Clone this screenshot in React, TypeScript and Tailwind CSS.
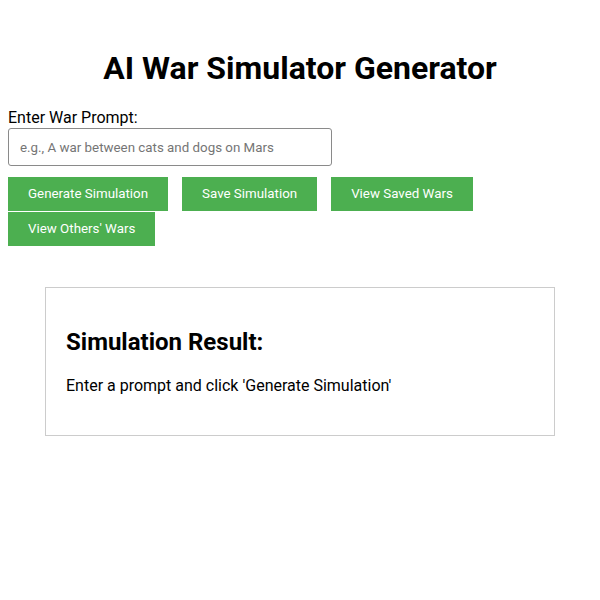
import React, { useState } from "react";

const buttons = ["Generate Simulation", "Save Simulation", "View Saved Wars", "View Others' Wars"];

const App: React.FC = () => {
  const [prompt, setPrompt] = useState("");

  return (
    <div className="min-h-[600px] bg-white px-2 pt-[50px] text-black" style={{ fontFamily: "Roboto, 'Noto Sans', sans-serif" }}>
      <h1 className="mb-[21px] text-center text-[32px] font-bold leading-[37px]">AI War Simulator Generator</h1>

      <label htmlFor="prompt" className="block text-base leading-[19px]">
        Enter War Prompt:
      </label>
      <input
        id="prompt"
        type="text"
        value={prompt}
        onChange={(e) => setPrompt(e.target.value)}
        placeholder="e.g., A war between cats and dogs on Mars"
        className="mt-px h-[38px] w-[324px] rounded-[3px] border border-[#8a8a8a] px-[11px] text-[13.333px] text-black placeholder-[#757575] outline-none"
      />

      <div className="mt-[11px] flex flex-wrap gap-x-[14px] gap-y-px">
        {buttons.map((b) => (
          <button key={b} className="h-[34px] bg-[#4caf50] px-5 text-[13.333px] text-white">
            {b}
          </button>
        ))}
      </div>

      <div className="mx-auto mt-[41px] w-[510px] border border-[#cccccc] px-5 pb-[21px] pt-[40px]">
        <h2 className="text-2xl font-bold leading-[28px]">Simulation Result:</h2>
        <p className="mb-[19px] mt-5 text-base leading-[19px]">Enter a prompt and click 'Generate Simulation'</p>
      </div>
    </div>
  );
};

export default App;
